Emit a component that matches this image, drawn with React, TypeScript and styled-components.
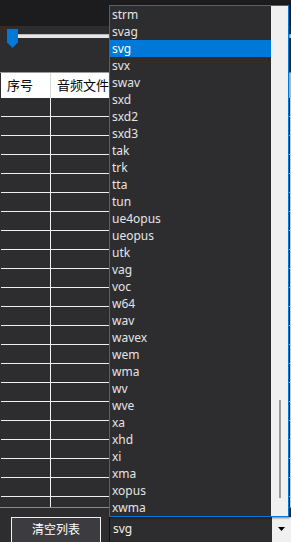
import styled, { createGlobalStyle } from "styled-components";

const formats = [
  "strm", "svag", "svg", "svx", "swav", "sxd", "sxd2", "sxd3", "tak", "trk",
  "tta", "tun", "ue4opus", "ueopus", "utk", "vag", "voc", "w64", "wav", "wavex",
  "wem", "wma", "wv", "wve", "xa", "xhd", "xi", "xma", "xopus", "xwma",
];

const GlobalStyle = createGlobalStyle`
  body {
    margin: 0;
    background: #2d2d30;
    font-family: "Noto Sans", "Noto Sans CJK SC", sans-serif;
    overflow: hidden;
  }
`;

export default function App() {
  const selected = "svg";
  const rows = Array.from({ length: 22 }, (_, i) => i);

  return (
    <Window>
      <GlobalStyle />
      <TopBar />
      <SliderRow>
        <Track />
        <Thumb />
      </SliderRow>
      <Table>
        <HeaderRow>
          <HeadCell $width={50}>序号</HeadCell>
          <HeadCell>音频文件</HeadCell>
        </HeaderRow>
        <Body>
          {rows.map((r) => (
            <Row key={r}>
              <Cell $width={50} />
              <Cell />
            </Row>
          ))}
        </Body>
      </Table>
      <Footer>
        <Button>清空列表</Button>
        <Combo>
          <ComboText>{selected}</ComboText>
          <ComboArrow>
            <svg width="7" height="4" viewBox="0 0 7 4">
              <path d="M0 0h7L3.5 4z" fill="#000" />
            </svg>
          </ComboArrow>
        </Combo>
      </Footer>

      <DropList>
        <Items>
          {formats.map((f) => (
            <Item key={f} $active={f === selected}>
              {f}
            </Item>
          ))}
        </Items>
        <ScrollTrack>
          <ScrollThumb />
        </ScrollTrack>
      </DropList>
    </Window>
  );
}

const Window = styled.div`
  position: relative;
  width: 291px;
  height: 542px;
  overflow: hidden;
  background: #2d2d30;
`;

const TopBar = styled.div`
  height: 26px;
  background: #1c1c1e;
`;

const SliderRow = styled.div`
  position: relative;
  height: 46px;
`;

const Track = styled.div`
  position: absolute;
  left: 12px;
  right: 0;
  top: 8px;
  height: 4px;
  background: #e6e6e6;
  border-top: 1px solid #bcbcbc;
  box-sizing: border-box;
`;

const Thumb = styled.div`
  position: absolute;
  left: 7px;
  top: 3px;
  width: 11px;
  height: 19px;
  background: #0078d7;
  clip-path: polygon(0 0, 100% 0, 100% 70%, 50% 100%, 0 70%);
`;

const Table = styled.div`
  border-top: 1px solid #9a9a9a;
  border-bottom: 1px solid #8a8a8a;
  height: 434px;
  overflow: hidden;
`;

const HeaderRow = styled.div`
  display: flex;
  height: 25px;
  background: #ffffff;
  margin-left: 1px;
`;

const HeadCell = styled.div<{ $width?: number }>`
  ${(p) => (p.$width ? `width: ${p.$width}px;` : "flex: 1;")}
  box-sizing: border-box;
  border-right: 1px solid #d8d8d8;
  padding-left: 6px;
  font-size: 13px;
  line-height: 25px;
  color: #000;
  white-space: nowrap;
  overflow: hidden;
`;

const Body = styled.div`
  display: flex;
  flex-direction: column;
  margin-left: 1px;
`;

const Row = styled.div`
  display: flex;
  height: 19px;
  flex-shrink: 0;
  box-sizing: border-box;
  border-bottom: 1px solid #f0f0f0;
`;

const Cell = styled.div<{ $width?: number }>`
  ${(p) => (p.$width ? `width: ${p.$width}px;` : "flex: 1;")}
  box-sizing: border-box;
  border-right: 1px solid #f0f0f0;
`;

const Footer = styled.div`
  display: flex;
  align-items: flex-start;
  padding: 9px 0 0 11px;
  gap: 8px;
`;

const Button = styled.div`
  width: 90px;
  height: 26px;
  box-sizing: border-box;
  border: 1px solid #f0f0f0;
  background: #3c3c40;
  color: #ffffff;
  font-size: 12px;
  line-height: 24px;
  text-align: center;
`;

const Combo = styled.div`
  flex: 1;
  display: flex;
  height: 26px;
  box-sizing: border-box;
  border-left: 1px solid #111;
  background: #2d2d30;
`;

const ComboText = styled.div`
  flex: 1;
  padding-left: 3px;
  color: #f0f0f0;
  font-size: 12px;
  line-height: 24px;
`;

const ComboArrow = styled.div`
  width: 19px;
  background: #f0f0f0;
  display: flex;
  justify-content: center;
  padding-top: 10px;
  box-sizing: border-box;
`;

const DropList = styled.div`
  position: absolute;
  left: 109px;
  top: 5px;
  width: 180px;
  height: 512px;
  box-sizing: border-box;
  border: 1px solid #0078d7;
  background: #2d2d30;
  display: flex;
  box-shadow: 1px 1px 2px rgba(0, 0, 0, 0.5);
`;

const Items = styled.div`
  flex: 1;
  overflow: hidden;
`;

const Item = styled.div<{ $active: boolean }>`
  height: 17px;
  padding-left: 2px;
  font-size: 12px;
  line-height: 17px;
  color: ${(p) => (p.$active ? "#ffffff" : "#e4e4e4")};
  background: ${(p) => (p.$active ? "#0078d7" : "transparent")};
`;

const ScrollTrack = styled.div`
  position: relative;
  width: 17px;
  background: #f0f0f0;
`;

const ScrollThumb = styled.div`
  position: absolute;
  left: 8px;
  top: 394px;
  width: 2px;
  height: 98px;
  background: #999999;
`;
